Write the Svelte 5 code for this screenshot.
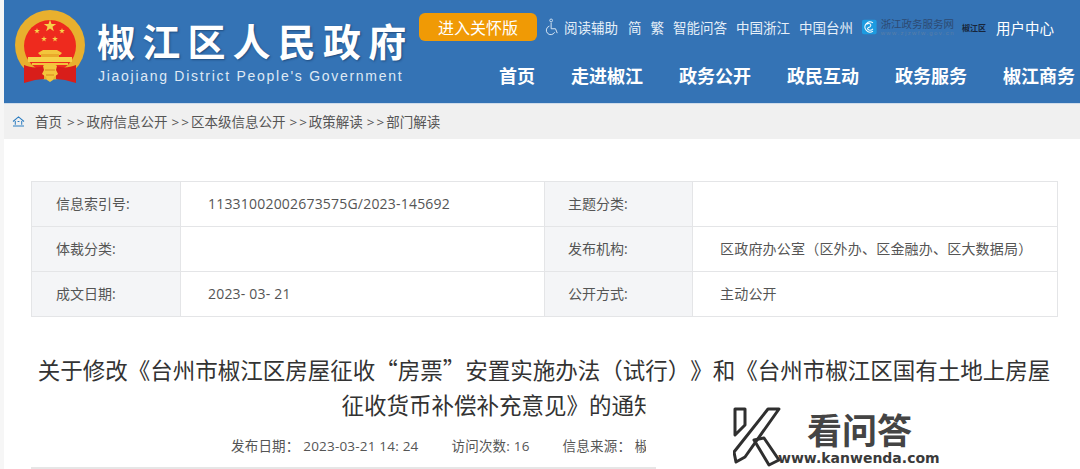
<script>
    const topLinks = ['简', '繁', '智能问答', '中国浙江', '中国台州'];
    const nav = ['首页', '走进椒江', '政务公开', '政民互动', '政务服务', '椒江商务'];
    const crumbs = ['政府信息公开', '区本级信息公开', '政策解读', '部门解读'];
    const rows = [
        ['信息索引号:', '11331002002673575G/2023-145692', '主题分类:', ''],
        ['体裁分类:', '', '发布机构:', '区政府办公室（区外办、区金融办、区大数据局）'],
        ['成文日期:', '2023- 03- 21', '公开方式:', '主动公开']
    ];
    const stars = [
        [50, 26, 6.5],
        [37, 31, 3],
        [62, 31, 3],
        [44, 39, 3],
        [55, 39, 3]
    ];

    function star(cx, cy, r) {
        let pts = [];
        for (let i = 0; i < 10; i++) {
            const rad = i % 2 ? r * 0.4 : r;
            const a = -Math.PI / 2 + (i * Math.PI) / 5;
            pts.push((cx + rad * Math.cos(a)).toFixed(1) + ',' + (cy + rad * Math.sin(a)).toFixed(1));
        }
        return pts.join(' ');
    }
</script>

<div class="page" lang="zh-CN">
    <header class="header">
        <svg class="emblem" viewBox="15 10 70 75" width="70" height="75">
            <circle cx="50" cy="45" r="35" fill="#e8b02e" />
            <circle cx="50" cy="46" r="26" fill="#ee2a1e" />
            {#each stars as [x, y, r]}
                <polygon points={star(x, y, r)} fill="#f6d24a" />
            {/each}
            <path d="M38 53l5-3h14l5 3-2 2H40z" fill="#f3c53c" />
            <rect x="41" y="54" width="18" height="3" fill="#e9a92a" />
            <path d="M28 57h44v5H28z" fill="#f6d24a" />
            <path d="M32 63h36v2H32z" fill="#f3c53c" />
            <path d="M24 65c7 3 14 3 20 1v13l-9 1-11 3zM76 65c-7 3-14 3-20 1v13l9 1 11 3z" fill="#d81e1a" />
            <path d="M43 66c2-2 5-2 7-1 2-1 5-1 7 1l-1 4 2 4-4 3-1 3-3 2-3-2-1-3-4-3 2-4z" fill="#f3c53c" />
            <path d="M45 70h10M46 75h8" stroke="#d8861f" stroke-width="1" />
        </svg>
        <div class="site-name">
            <div class="cn-name">椒江区人民政府</div>
            <div class="en-name">Jiaojiang District People's Government</div>
        </div>
        <div class="header-right">
            <div class="top-row">
                <button class="care-btn">进入关怀版</button>
                <svg class="access" viewBox="0 0 16 20" width="14" height="18">
                    <circle cx="7" cy="2.500" r="1.600" fill="none" stroke="#dce8f5" stroke-width="1" />
                    <path d="M7 5v7h5l2 5M5 9a5 5 0 1 0 6 7" fill="none" stroke="#dce8f5" stroke-width="1.100" />
                </svg>
                <span class="reader">阅读辅助</span>
                {#each topLinks as link}
                    <a href="#top" class="top-link">{link}</a>
                {/each}
                <div class="zj-logo">
                    <svg viewBox="0 0 16 16" width="16" height="16">
                        <rect width="16" height="16" rx="2" fill="#1d9be0" />
                        <path d="M12 3.500a5.500 5.500 0 1 0 0 9M5 5c3-2 6 0 4 2.500-1 1-3 1-3 2.500 1 2 4 2 6 0" fill="none" stroke="#fff" stroke-width="1.100" />
                    </svg>
                    <div>
                        <div class="zj-name">浙江政务服务网</div>
                        <div class="zj-url">www.zjzwfw.gov.cn</div>
                    </div>
                </div>
                <span class="zj-area">椒江区</span>
                <a href="#top" class="user">用户中心</a>
            </div>
            <nav class="nav">
                {#each nav as item}
                    <a href="#top">{item}</a>
                {/each}
            </nav>
        </div>
    </header>

    <div class="crumbs">
        <svg viewBox="0 0 14 12" width="13" height="11">
            <path d="M1 6l6-5 6 5M3.500 5.500v4M10.500 5.500v4M6 6h2M1 11h12" fill="none" stroke="#2b7cc0" stroke-width="1.100" />
        </svg>
        <span class="home">首页</span>
        {#each crumbs as crumb}
            <span class="crumb"><span class="sep">&gt;&gt;</span>{crumb}</span>
        {/each}
    </div>

    <main class="content">
        <table class="info">
            <colgroup>
                <col style="width: 149px" />
                <col style="width: 364px" />
                <col style="width: 148px" />
                <col style="width: 365px" />
            </colgroup>
            <tbody>
                {#each rows as row}
                    <tr>
                        <th>{row[0]}</th>
                        <td>{row[1]}</td>
                        <th>{row[2]}</th>
                        <td>{row[3]}</td>
                    </tr>
                {/each}
            </tbody>
        </table>

        <h1>关于修改《台州市椒江区房屋征收“房票”安置实施办法（试行）》和《台州市椒江区国有土地上房屋征收货币补偿补充意见》的通知<span class="title-tail"></span></h1>

        <div class="meta">
            <span>发布日期： 2023-03-21 14: 24</span>
            <span>访问次数: 16</span>
            <span>信息来源： 椒江区</span>
        </div>
        <div class="rule"></div>
    </main>

    <div class="watermark">
        <svg class="k-logo" viewBox="0 0 48 60" width="48" height="60">
            <g fill="none" stroke="#2f2f2f" stroke-width="3" stroke-linejoin="round">
                <path d="M2 2h10v16L2 28z" />
                <path d="M35 2h11L12 50l-9 5-2-10z" />
                <path d="M21 33l10-2 15 22-10 5z" />
            </g>
        </svg>
        <div class="wm-cn">看问答</div>
        <div class="wm-url">www.kanwenda.com</div>
    </div>
</div>

<style>
    :global(body) {
        margin: 0;
        background: #fff;
        overflow: hidden;
    }

    .page {
        position: relative;
        height: 469px;
        overflow: hidden;
        font-family: "Open Sans", "Noto Sans CJK SC", sans-serif;
        text-spacing-trim: space-all;
        border-left: 4px solid #f6f6f6;
        box-sizing: border-box;
    }

    .header {
        display: flex;
        height: 103px;
        margin-left: -4px;
        padding: 10px 0 0 15px;
        box-sizing: border-box;
        background: #3473b5;
        color: #fff;
    }

    .emblem {
        flex: none;
    }

    .site-name {
        flex: none;
        width: 322px;
        margin-left: 12px;
    }

    .cn-name {
        margin-top: 6px;
        font-size: 38px;
        line-height: 50px;
        font-weight: 700;
        letter-spacing: 7.200px;
        white-space: nowrap;
        text-shadow: 1px 1px 2px rgba(20, 50, 90, 0.6);
    }

    .en-name {
        margin: 1px 0 0 1px;
        font-family: "Liberation Sans", sans-serif;
        font-size: 14px;
        line-height: 18px;
        letter-spacing: 1.720px;
        white-space: nowrap;
        color: #dfe9f4;
    }

    .header-right {
        display: flex;
        flex: none;
        flex-direction: column;
        width: 660px;
    }

    .top-row {
        display: flex;
        align-items: center;
        height: 28px;
        margin-top: 3px;
        font-size: 13.500px;
        white-space: nowrap;
    }

    .care-btn {
        width: 118px;
        height: 28px;
        margin-right: 8px;
        padding: 0;
        border: none;
        border-radius: 6px;
        background: #f09a05;
        color: #fff;
        font-family: inherit;
        font-size: 16px;
    }

    .access {
        margin-right: 5px;
    }

    .reader {
        margin-right: 10px;
        color: #e6eff8;
    }

    .top-link {
        margin-right: 9px;
        color: #e6eff8;
        text-decoration: none;
    }

    .zj-logo {
        display: flex;
        flex: none;
        gap: 4px;
        align-items: center;
        width: 93px;
    }

    .zj-name {
        font-size: 10.500px;
        line-height: 12px;
        color: #2d4a72;
    }

    .zj-url {
        font-family: "Liberation Sans", sans-serif;
        font-size: 6px;
        line-height: 6px;
        letter-spacing: 1.400px;
        color: #5a7ea8;
    }

    .zj-area {
        margin-left: 7px;
        font-size: 8px;
        font-weight: 700;
        color: #17253a;
    }

    .user {
        margin-left: 10px;
        font-size: 14.500px;
        color: #fff;
        text-decoration: none;
    }

    .nav {
        display: flex;
        gap: 36px;
        margin: 22px 0 0 80px;
    }

    .nav a {
        font-size: 18px;
        line-height: 26px;
        font-weight: 700;
        color: #fff;
        text-decoration: none;
        white-space: nowrap;
    }

    .crumbs {
        display: flex;
        align-items: center;
        height: 36px;
        margin-left: -4px;
        padding: 0 0 1px 12px;
        box-sizing: border-box;
        background: #f0f0f0;
        border-top: 1px solid #cfdcea;
        font-size: 13.500px;
        color: #555;
        white-space: nowrap;
    }

    .home {
        margin: 0 5px 0 10px;
    }

    .crumb {
        margin-right: 4px;
    }

    .sep {
        letter-spacing: 2px;
    }

    .content {
        padding: 42px 23px 0 27px;
    }

    .info {
        width: 1026px;
        border-collapse: collapse;
        table-layout: fixed;
        font-size: 14px;
        color: #555;
    }

    .info th,
    .info td {
        height: 45px;
        padding: 0;
        border: 1px solid #e4e5e7;
        text-align: left;
        font-weight: 400;
        box-sizing: border-box;
    }

    .info th {
        padding: 0 0 2px 24px;
        background: #f4f5f7;
    }

    .info th:nth-child(3) {
        padding-left: 23px;
    }

    .info td {
        padding: 0 0 2px 27px;
        letter-spacing: 0.200px;
    }

    h1 {
        margin: 35px 0 0;
        font-family: "Noto Sans CJK SC", sans-serif;
        font-size: 22.500px;
        font-feature-settings: "fwid";
        line-height: 35px;
        font-weight: 400;
        text-align: center;
        color: #333;
    }

    .title-tail {
        display: inline-block;
        width: 90px;
    }

    .meta {
        display: flex;
        gap: 33px;
        margin: 14px 0 0 200px;
        font-size: 13.500px;
        line-height: 20px;
        letter-spacing: 0.200px;
        color: #555;
        white-space: nowrap;
    }

    .rule {
        width: 625px;
        height: 2px;
        margin-top: 11px;
        background: #e6e6e6;
    }

    .watermark {
        position: absolute;
        top: 393px;
        left: 642px;
        width: 434px;
        height: 74px;
        background: #fff;
    }

    .k-logo {
        position: absolute;
        top: 14px;
        left: 87px;
    }

    .wm-cn {
        position: absolute;
        top: 20px;
        left: 161px;
        font-size: 35px;
        line-height: 36px;
        font-weight: 700;
        color: #444;
        white-space: nowrap;
    }

    .wm-url {
        position: absolute;
        top: 57px;
        left: 132px;
        font-family: "DejaVu Sans", sans-serif;
        font-size: 14px;
        line-height: 16px;
        font-weight: 700;
        color: #3a3a3a;
        white-space: nowrap;
    }
</style>
